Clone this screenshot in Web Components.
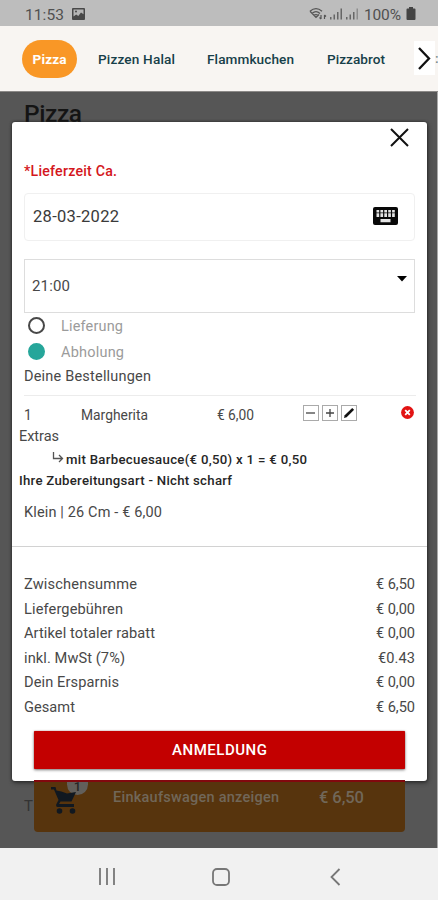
<!DOCTYPE html>
<html lang="de">
<head>
<meta charset="utf-8">
<title>Pizza</title>
<style>
body{margin:0;width:438px;height:900px;overflow:hidden;display:flex;flex-direction:column;font-family:Roboto,"Liberation Sans",sans-serif;color:#484848;background:#565656}
</style>
</head>
<body>
<status-bar></status-bar>
<category-tabs></category-tabs>
<shop-page></shop-page>
<system-nav></system-nav>
<script>
const define = (name, html) => {
  const t = document.createElement('template');
  t.innerHTML = html;
  customElements.define(name, class extends HTMLElement {
    constructor() {
      super();
      this.attachShadow({mode: 'open'}).append(t.content.cloneNode(true));
    }
  });
};

// Single-line label whose tracking is adjusted to occupy the width in `w`.
customElements.define('fit-text', class extends HTMLElement {
  connectedCallback() {
    if (this.shadowRoot) return;
    const w = +this.getAttribute('w');
    this.attachShadow({mode: 'open'}).innerHTML =
      `<style>:host{display:inline-block;flex:none;width:${w}px;white-space:nowrap;line-height:20px}</style><span><slot></slot></span>`;
    const span = this.shadowRoot.querySelector('span');
    const n = this.textContent.length;
    const natural = span.getBoundingClientRect().width;
    if (natural) span.style.letterSpacing = ((w - natural) / Math.max(n - 1, 1)).toFixed(3) + 'px';
  }
});

define('status-bar', `
<style>
:host{display:flex;align-items:center;height:26px;flex:none;box-sizing:border-box;padding:3px 22px 0 25px;background:#bdbdbd;color:#505050;font-size:15.5px}
svg{flex:none}.grow{flex:1}
</style>
<fit-text w="39">11:53</fit-text>
<svg style="margin:-2px 0 0 8px" width="13" height="12" viewBox="0 0 13 12"><rect width="13" height="12" rx="1" fill="#484848"/><path d="M1.5 1.5h10v4.8L9 4.5 6.3 8 4.2 6.5l-2.7 2z" fill="#b5b5b5"/><circle cx="4" cy="3.5" r="1" fill="#484848"/></svg>
<span class="grow"></span>
<svg style="margin-top:-2px" width="18" height="14" viewBox="0 0 18 14" fill="none" stroke="#555" stroke-width="1.3"><path d="M1 4.2Q7 -1 13 4.2M3 6.4Q7 3 11 6.4M5 8.4Q7 6.8 9 8.4M1 4.2L7 10.4L10 7.500"/><path d="M12 12V8M10.500 10.500l1.500 1.500M15.500 8v4M15.500 8l1.500 1.500" stroke-width="1.2"/></svg>
<svg style="margin:-2px 0 0 3px" width="30" height="14" viewBox="0 0 30 14" fill="#666"><path d="M0 10h1.5v2.5H0zM3.5 7.5H5v5H3.500zM7 5h1.500v7.500H7zM10.500 1.500H12v11h-1.500zM16 10h1.500v2.500H16zM19.500 7.500H21v5h-1.500zM23 5h1.500v7.500H23z"/><path d="M26.500 1.500H28v11h-1.500z" fill="#8d8d8d"/></svg>
<fit-text w="37" style="margin-left:4px">100%</fit-text>
<svg style="margin:-2px 0 0 5px" width="10" height="13" viewBox="0 0 10 13" fill="#444"><path d="M3 0h4v1.500h1.500q1 0 1 1V12q0 1-1 1h-7q-1 0-1-1V2.500q0-1 1-1H3z"/></svg>
`);

define('category-tabs', `
<style>
:host{display:flex;align-items:center;height:65px;flex:none;background:#f8f5f2;color:#173f49;font-size:13.6px;font-weight:500;position:relative;box-sizing:border-box;padding-left:22px}
.pill{display:flex;align-items:center;justify-content:center;width:55px;height:38px;border-radius:19px;background:#f99726;color:#fff;font-weight:700}
.next{position:absolute;right:3px;top:15px;width:21px;height:34px;background:#fff;display:flex;align-items:center;justify-content:center}
.more{position:absolute;right:0;top:24px;width:3px;overflow:hidden;opacity:.6}
</style>
<div class="pill"><fit-text w="34">Pizza</fit-text></div>
<fit-text w="77" style="margin-left:21px">Pizzen Halal</fit-text>
<fit-text w="87" style="margin-left:32px">Flammkuchen</fit-text>
<fit-text w="58" style="margin-left:33px">Pizzabrot</fit-text>
<span class="more">:</span>
<div class="next"><svg width="13" height="23" viewBox="0 0 13 23" fill="none" stroke="#111" stroke-width="2.3"><path d="M1 1l10 10.500L1 22"/></svg></div>
`);

define('shop-page', `
<style>
:host{display:block;position:relative;height:757px;flex:none;background:#565656;border-top:1px solid #8b8987;box-sizing:border-box;box-shadow:inset -1px 0 #aaa}
.title{padding:7px 0 0 24px;font-size:24.5px;font-weight:500;color:#141414}
order-modal{position:absolute;left:12px;top:30px}
cart-bar{position:absolute;left:34px;top:688px}
.under{position:absolute;left:24px;top:705px;font-size:15px;color:#333}
.edge{position:absolute;left:34px;top:688px;width:371px;height:2px;background:#82080e}
</style>
<div class="title"><fit-text w="58">Pizza</fit-text></div>
<span class="under">T</span>
<order-modal></order-modal>
<cart-bar></cart-bar>
<div class="edge"></div>
`);

define('cart-bar', `
<style>
:host{display:flex;box-sizing:border-box;width:371px;height:52px;background:#57340d;border-radius:0 0 4px 4px;color:#716759;font-weight:500;font-size:14.5px;padding:7px 0 0 17px}
.cart{position:relative;width:35px;height:34px}
.cart svg{position:absolute;left:0;top:0}
.badge{position:absolute;left:16px;top:-6px;width:21px;height:14px;border-radius:0 0 11px 11px;background:#625f5b;color:#262626;font-size:13px;line-height:11px;text-align:center}
</style>
<div class="cart"><span class="badge">1</span><svg width="26" height="28" viewBox="0 0 26 28"><path d="M0 0h4.500l1 3.500Q10 4 16 6.500L25 5l-4.500 9.500H9.500l-1.500 2.500h15V20H6.500q-2-.500-1.300-2.500L7.500 13 3 2.500H0z" fill="#111820"/><circle cx="8.500" cy="24" r="2.800" fill="#111820"/><circle cx="21.500" cy="24" r="2.800" fill="#111820"/></svg></div>
<fit-text w="166" style="margin-left:27px;padding-top:1px">Einkaufswagen anzeigen</fit-text>
<fit-text w="45" style="margin-left:40px;font-size:16.5px;padding-top:1px">€ 6,50</fit-text>
`);

define('square-button', `
<style>:host{display:flex;align-items:center;justify-content:center;box-sizing:border-box;width:16px;height:16px;border:1px solid #aaa;background:#fff}</style><slot></slot>`);

define('radio-option', `
<style>
:host{display:flex;align-items:center;height:26px;padding-left:16px;color:#9b9b9b;font-size:14.500px;gap:16px}
i{width:17px;height:17px;box-sizing:border-box;border-radius:50%;border:2px solid #484848;margin-top:-2px}
:host([checked]) i{background:#26a69a;border-color:#26a69a}
</style><i></i><slot></slot>`);

define('total-row', `
<style>:host{display:flex;justify-content:space-between;align-items:center;height:24.500px;padding:0 12px;font-size:14.6px}</style>
<slot></slot><slot name="value"></slot>`);

define('order-modal', `
<style>
:host{display:flex;flex-direction:column;box-sizing:border-box;width:415px;height:659px;background:#fff;border-radius:3px;box-shadow:0 0 3px #222,1px 2px 4px #333}
.close{display:flex;justify-content:flex-end;height:39px;box-sizing:border-box;padding:6px 18px 0 0}
.label{padding-left:12px;height:32px;color:#d41620;font-weight:500;font-size:14.2px}
.field{box-sizing:border-box;margin-left:12px;width:391px;display:flex;justify-content:space-between}
.date{height:48px;border:1px solid #f0f0f0;border-radius:4px;align-items:center;padding:0 16px 1px 8px;font-size:16.5px;color:#3a3a3a}
.date svg{margin-top:-2px}
.time{height:54px;margin-top:18px;border:1px solid #ddd;padding:16px 7px 0 7px;font-size:15px}
.pad{padding-left:12px}
.line{margin:0 11px 0 12px;border-top:1px solid #ececec;height:0}
.item{display:flex;align-items:center;height:35px;padding:2px 13px 0 12px;box-sizing:border-box;font-size:13.800px}
.tools{display:flex;gap:3px;margin:-4px 0 0 49px}
.del{margin:-5px 0 0 auto}
.row{display:flex;align-items:center}
.bold{color:#262626;font-weight:500;font-size:13.2px}
.totals{border-top:1px solid #d2d2d2;padding-top:25px}
.btn{display:flex;align-items:center;justify-content:center;margin:12px 0 0 22px;width:371px;height:38px;background:#c30000;color:#fff;font-weight:500;font-size:15px;box-shadow:0 1px 3px #777,0 0 1px #b33;border-radius:1px}
</style>
<div class="close"><svg width="19" height="19" viewBox="0 0 19 19" stroke="#111" stroke-width="2"><path d="M1 1l17 17M18 1L1 18"/></svg></div>
<div class="label"><fit-text w="93">*Lieferzeit Ca.</fit-text></div>
<div class="field date"><fit-text w="86">28-03-2022</fit-text>
<svg width="25" height="18" viewBox="0 0 25 18"><rect width="25" height="18" rx="2" fill="#080808"/><path d="M3.500 3h2.700v2.500H3.500zM7.400 3h2.700v2.500H7.400zM11.300 3H14v2.500h-2.700zM15.200 3h2.700v2.500h-2.700zM19.100 3h2.700v2.500h-2.700zM3.500 6.300h2.700v3.700H3.500zM7.400 6.300h2.700v3.700H7.400zM11.300 6.300H14v3.700h-2.700zM15.200 6.300h2.700v3.700h-2.700zM19.100 6.300h2.700v3.700h-2.700zM7.500 12h10v3.300h-10z" fill="#e4e4e4"/></svg></div>
<div class="field time"><fit-text w="38">21:00</fit-text><svg width="10" height="6" viewBox="0 0 10 6"><path d="M0 0h10L5 5.500z"/></svg></div>
<radio-option style="padding-top:1px;box-sizing:border-box"><fit-text w="62">Lieferung</fit-text></radio-option>
<radio-option checked style="padding-top:1px;box-sizing:border-box"><fit-text w="63">Abholung</fit-text></radio-option>
<div class="row pad" style="height:26px;padding-bottom:1px;box-sizing:border-box;font-size:14.5px;margin-top:-1px"><fit-text w="127">Deine Bestellungen</fit-text></div>
<div class="line" style="margin-top:5px"></div>
<div class="item"><fit-text w="7">1</fit-text><fit-text w="67" style="margin-left:50px">Margherita</fit-text><fit-text w="37" style="margin-left:69px">€ 6,00</fit-text>
<div class="tools"><square-button><svg width="10" height="10"><path d="M0 5h9" stroke="#444" stroke-width="1.300"/></svg></square-button><square-button><svg width="10" height="10"><path d="M1 5h8M5 1v8" stroke="#444" stroke-width="1.300"/></svg></square-button><square-button><svg width="12" height="12" viewBox="0 0 12 12"><path d="M1 11l.700-2.700L9.200.900l1.900 1.900-7.500 7.400z" fill="#111"/></svg></square-button></div>
<svg class="del" width="13" height="13" viewBox="0 0 13 13"><circle cx="6.500" cy="6.500" r="6.400" fill="#e21313"/><path d="M4.200 4.200l4.600 4.600M8.800 4.200L4.200 8.800" stroke="#fff" stroke-width="1.800"/></svg></div>
<div class="row" style="height:16px;padding-left:7px;font-size:14.5px;margin-top:-2px"><fit-text w="40">Extras</fit-text></div>
<div class="row bold" style="height:30px;padding-left:40px"><svg style="margin:-6px 3px 0 0" width="12" height="12" viewBox="0 0 12 12" fill="none" stroke="#555" stroke-width="1.300"><path d="M1.500 1v6.500H10M7 4l3.500 3.500L7 11"/></svg><fit-text w="241" style="margin-left:-1px">mit Barbecuesauce(€ 0,50) x 1 = € 0,50</fit-text></div>
<div class="row bold" style="height:12px;padding-left:7px"><fit-text w="213">Ihre Zubereitungsart - Nicht scharf</fit-text></div>
<div class="row pad" style="height:59px;padding-bottom:8px;box-sizing:border-box;font-size:14.5px"><fit-text w="138">Klein | 26 Cm - € 6,00</fit-text></div>
<div class="totals">
<total-row><fit-text w="113">Zwischensumme</fit-text><fit-text slot="value" w="39">€ 6,50</fit-text></total-row>
<total-row><fit-text w="99">Liefergebühren</fit-text><fit-text slot="value" w="39">€ 0,00</fit-text></total-row>
<total-row><fit-text w="131">Artikel totaler rabatt</fit-text><fit-text slot="value" w="39">€ 0,00</fit-text></total-row>
<total-row><fit-text w="101">inkl. MwSt (7%)</fit-text><fit-text slot="value" w="37">€0.43</fit-text></total-row>
<total-row><fit-text w="95">Dein Ersparnis</fit-text><fit-text slot="value" w="39">€ 0,00</fit-text></total-row>
<total-row><fit-text w="51">Gesamt</fit-text><fit-text slot="value" w="39">€ 6,50</fit-text></total-row>
</div>
<div class="btn"><fit-text w="95">ANMELDUNG</fit-text></div>
`);

define('system-nav', `
<style>
:host{display:flex;align-items:center;height:52px;flex:none;box-sizing:border-box;padding:5px 97px 0 98px;background:#f1f1f1;justify-content:space-between}
svg{fill:none;stroke:#777;stroke-width:1.800}
</style>
<svg width="18" height="17"><path d="M2 0v17M9 0v17M16 0v17"/></svg>
<svg style="margin-right:5px" width="20" height="18"><rect x="2" y="1" width="16" height="16" rx="4"/></svg>
<svg width="11" height="18"><path d="M9.500 1L1.500 9l8 8"/></svg>
`);
</script>
</body>
</html>
